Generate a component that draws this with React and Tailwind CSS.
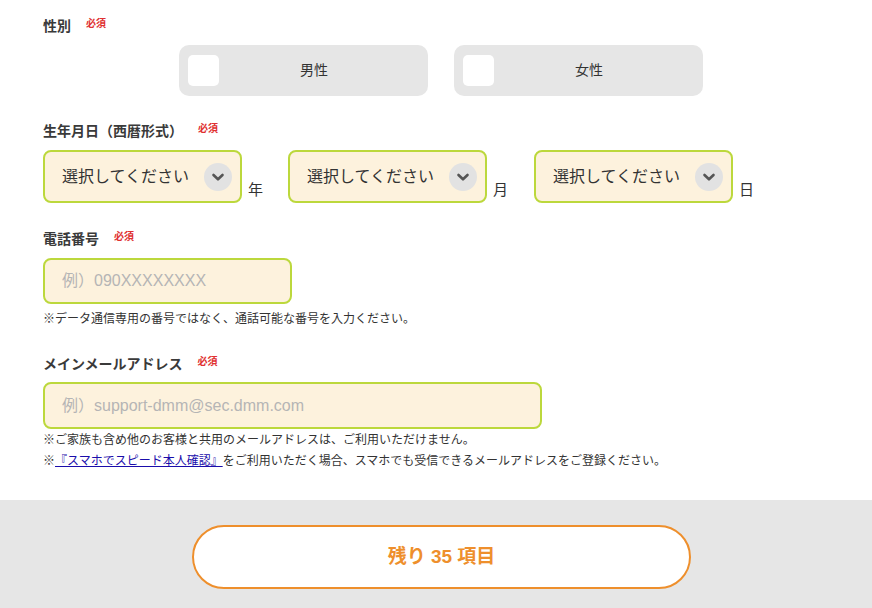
import { useState } from "react";

const FONT = { fontFamily: '"Liberation Sans", "Noto Sans CJK JP", sans-serif' };

function Required() {
  return (
    <span className="ml-[15px] -translate-y-[2px] text-[10px] font-bold leading-none text-[#e03131]">
      必須
    </span>
  );
}

function Label({ children }) {
  return (
    <div className="flex h-[20px] items-center text-[14px] font-bold leading-[20px] text-[#3a3a3a]">
      <span>{children}</span>
      <Required />
    </div>
  );
}

function Chevron() {
  return (
    <span className="flex h-[28px] w-[28px] items-center justify-center rounded-full bg-[#e2e2e2]">
      <svg width="16" height="16" viewBox="0 0 16 16" fill="none">
        <path
          d="M3.5 6 L8 10.3 L12.5 6"
          stroke="#555"
          strokeWidth="2.6"
          strokeLinecap="round"
          strokeLinejoin="round"
        />
      </svg>
    </span>
  );
}

function Select({ unit, unitWidth }) {
  return (
    <div className="flex items-end">
      <div className="flex h-[53px] w-[199px] items-center justify-between rounded-[8px] border-2 border-[#bcd83c] bg-[#fdf2dd] pl-[17px] pr-[8px]">
        <span className="text-[16px] text-[#333]">選択してください</span>
        <Chevron />
      </div>
      <span className={`mb-[3px] ml-[6px] text-[15px] leading-[20px] text-[#333] ${unitWidth}`}>{unit}</span>
    </div>
  );
}

function GenderOption({ label, active, onClick }) {
  return (
    <button
      type="button"
      onClick={onClick}
      className="flex h-[51px] w-[249px] items-center rounded-[10px] bg-[#e6e6e6] pl-[9px] pr-[19px]"
    >
      <span
        className={[
          "h-[31px] w-[31px] rounded-[5px]",
          active ? "bg-[#f0922b]" : "bg-white",
        ].join(" ")}
      />
      <span className="flex-1 text-center text-[14px] text-[#333]">{label}</span>
    </button>
  );
}

export default function App() {
  const [gender, setGender] = useState(null);

  return (
    <div style={FONT} className="min-h-[608px] w-full bg-[#e6e6e6]">
      {/* form */}
      <div className="bg-white pb-[28px] pl-[43px] pt-[16px]">
        <Label>性別</Label>
        <div className="ml-[136px] mt-[9px] flex gap-[26px]">
          <GenderOption label="男性" active={gender === "m"} onClick={() => setGender("m")} />
          <GenderOption label="女性" active={gender === "f"} onClick={() => setGender("f")} />
        </div>

        <div className="mt-[25px]">
          <Label>生年月日（西暦形式）</Label>
        </div>
        <div className="mt-[9px] flex">
          <Select unit="年" unitWidth="w-[40px]" />
          <Select unit="月" unitWidth="w-[41px]" />
          <Select unit="日" unitWidth="w-[40px]" />
        </div>

        <div className="mt-[26px]">
          <Label>電話番号</Label>
        </div>
        <div className="mt-[9px] flex h-[46px] w-[249px] items-center rounded-[8px] border-2 border-[#bcd83c] bg-[#fdf2dd] pl-[17px] text-[16px] text-[#b5b5b5]">
          例）090XXXXXXXX
        </div>
        <p className="mt-[6px] text-[12px] leading-[18px] text-[#333]">
          ※データ通信専用の番号ではなく、通話可能な番号を入力ください。
        </p>

        <div className="mt-[26px]">
          <Label>メインメールアドレス</Label>
        </div>
        <div className="mt-[8px] flex h-[47px] w-[499px] items-center rounded-[8px] border-2 border-[#bcd83c] bg-[#fdf2dd] pl-[17px] text-[16px] text-[#b5b5b5]">
          例）support-dmm@sec.dmm.com
        </div>
        <div className="mt-[1px] text-[12px] leading-[21px] text-[#333]">
          <p>※ご家族も含め他のお客様と共用のメールアドレスは、ご利用いただけません。</p>
          <p>
            ※
            <a href="#" className="text-[#1a0dab] underline">
              『スマホでスピード本人確認』
            </a>
            をご利用いただく場合、スマホでも受信できるメールアドレスをご登録ください。
          </p>
        </div>
      </div>

      {/* footer */}
      <div className="flex justify-center pt-[25px] pb-[20px]">
        <button
          type="button"
          className="ml-[11px] h-[64px] w-[499px] rounded-full border-2 border-[#ee8f2c] bg-white text-[19px] font-bold text-[#ee8f2c]"
        >
          残り 35 項目
        </button>
      </div>
    </div>
  );
}
